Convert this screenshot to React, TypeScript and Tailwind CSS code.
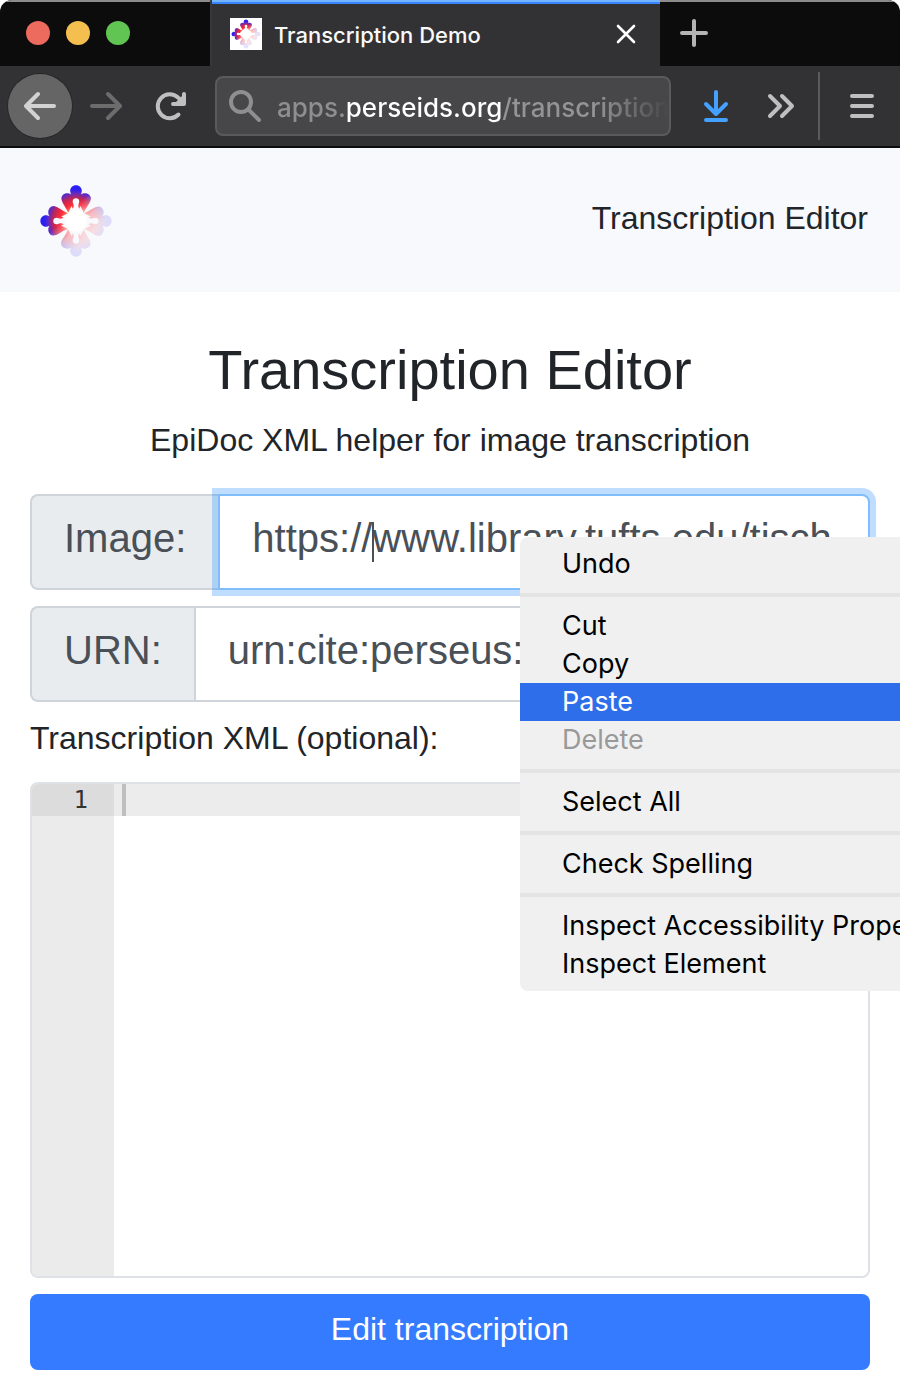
import { useId } from "react";

const PETAL =
  "M139 50 C149 50 157 58 156 68 C155 73 154 75 153 77 C164 69 182 75 183 88 C183 100 171 110 162 131 C158 122 156 120 152 111 L149 119 C145 114 145 110 147 104 C151 97 148 88 139 88 C130 88 127 97 131 104 C133 110 133 114 129 119 L126 111 C122 120 120 122 116 131 C107 110 96 100 96 88 C97 75 114 69 125 77 C124 75 123 73 122 68 C121 58 129 50 139 50 Z";

function Logo({ className }: { className: string }) {
  const id = useId();
  return (
    <svg viewBox="30 46 218 218" className={className} aria-hidden="true">
      <defs>
        <radialGradient id={`${id}c`} gradientUnits="userSpaceOnUse" cx="139" cy="155" r="106">
          <stop offset="0.28" stopColor="#ff8a5c" />
          <stop offset="0.46" stopColor="#fb2a3c" />
          <stop offset="0.62" stopColor="#c8264f" />
          <stop offset="0.76" stopColor="#6a2ab8" />
          <stop offset="0.88" stopColor="#2a20f5" />
        </radialGradient>
        <linearGradient id={`${id}f`} gradientUnits="userSpaceOnUse" x1="122" y1="128" x2="184" y2="190">
          <stop offset="0" stopColor="#fff" />
          <stop offset="0.55" stopColor="#fff" stopOpacity="0.3" />
          <stop offset="1" stopColor="#fff" stopOpacity="0.13" />
        </linearGradient>
        <mask id={`${id}m`} maskUnits="userSpaceOnUse" x="0" y="0" width="300" height="300">
          <rect width="300" height="300" fill={`url(#${id}f)`} />
        </mask>
      </defs>
      <circle cx="139" cy="155" r="32" fill="#fff" />
      <g mask={`url(#${id}m)`} fill={`url(#${id}c)`}>
        {[0, 90, 180, 270].map((angle) => (
          <path key={angle} d={PETAL} transform={`rotate(${angle} 139 155)`} />
        ))}
      </g>
    </svg>
  );
}

function TabStrip() {
  return (
    <div className="flex h-[66px] border-t-2 border-[#8c8c8c] bg-[#0c0c0d]">
      <div className="flex w-[210px] shrink-0 items-center gap-4 pb-0.5 pl-[26px]">
        <button aria-label="Close window" className="size-6 rounded-full bg-[#ed6a5e]" />
        <button aria-label="Minimize window" className="size-6 rounded-full bg-[#f5bf4f]" />
        <button aria-label="Zoom window" className="size-6 rounded-full bg-[#61c554]" />
      </div>
      <div className="-mt-0.5 flex w-[450px] items-center border-l-2 border-[#38383a] bg-[#323234] shadow-[inset_0_2px_#75b5ff,inset_0_4px_#3585fb]">
        <div className="ml-[18px] mt-0.5 flex size-8 items-center justify-center bg-white">
          <Logo className="size-[30px]" />
        </div>
        <span className="ml-3 mt-1 flex-1 text-[22px] font-medium leading-7 text-[#f9f9fa]">Transcription Demo</span>
        <button aria-label="Close tab" className="mr-6 mt-0.5">
          <svg viewBox="0 0 20 20" className="size-5" stroke="#fff" strokeWidth="2.6" strokeLinecap="round">
            <path d="M2 2L18 18M18 2L2 18" />
          </svg>
        </button>
      </div>
      <button aria-label="New tab" className="ml-5 pb-0.5">
        <svg viewBox="0 0 28 28" className="size-7" stroke="#b4b4b5" strokeWidth="4" strokeLinecap="round">
          <path d="M14 2V26M2 14H26" />
        </svg>
      </button>
    </div>
  );
}

function Toolbar() {
  return (
    <div className="flex h-[82px] items-center border-b-2 border-[#0c0c0d] bg-[#323234] pl-2 pr-6">
      <button
        aria-label="Back"
        className="flex size-16 shrink-0 items-center justify-center rounded-full bg-[#656565] shadow-[0_0_0_1px_#28282a]"
      >
        <svg viewBox="0 0 32 32" className="size-8" fill="none" stroke="#d2d2d3" strokeWidth="4" strokeLinecap="round" strokeLinejoin="round">
          <path d="M30 16H3M14 4L2 16L14 28" />
        </svg>
      </button>
      <button aria-label="Forward" disabled className="ml-[18px]">
        <svg viewBox="0 0 32 32" className="size-8" fill="none" stroke="#6c6c6d" strokeWidth="4" strokeLinecap="round" strokeLinejoin="round">
          <path d="M2 16H29M18 4L30 16L18 28" />
        </svg>
      </button>
      <button aria-label="Reload" className="ml-8">
        <svg viewBox="0 0 32 32" className="size-8" fill="none" stroke="#bfbfc0" strokeWidth="4" strokeLinecap="round" strokeLinejoin="round">
          <path d="M24.5 24.5A12 12 0 1 1 24 7.500L28 11" />
          <path d="M20 14H30V4Z" fill="#bfbfc0" stroke="none" />
          <path d="M30 4V14H19" />
        </svg>
      </button>
      <div className="ml-[29px] flex h-[60px] min-w-0 flex-1 items-center rounded-lg border-2 border-[#5a5a5c] bg-[#474749] pl-3">
        <svg viewBox="0 0 32 32" className="size-8 shrink-0" fill="none" stroke="#8f8f91" strokeWidth="4" strokeLinecap="round">
          <circle cx="12" cy="12" r="10" />
          <path d="M19.500 19.500L30 30" />
        </svg>
        <input
          aria-label="Address"
          defaultValue="apps.perseids.org/transcription"
          className="ml-4 w-full min-w-0 bg-[linear-gradient(90deg,#8f8f91_0_69px,#fff_69px_225px,#949496_225px_320px,#474749_392px)] bg-clip-text pt-1 text-[26px] font-medium leading-9 text-transparent outline-none"
        />
      </div>
      <button aria-label="Downloads" className="ml-[29px]">
        <svg viewBox="0 0 32 32" className="size-8" fill="none" stroke="#45a1ff" strokeWidth="4" strokeLinecap="round" strokeLinejoin="round">
          <path d="M16 2V23M6 14L16 24L26 14M6 30H26" />
        </svg>
      </button>
      <button aria-label="More tools" className="ml-[34px]">
        <svg viewBox="0 0 30 28" className="h-7 w-[30px]" fill="none" stroke="#bfbfc0" strokeWidth="4" strokeLinecap="round" strokeLinejoin="round">
          <path d="M4 4L14 14L4 24M16 4L26 14L16 24" />
        </svg>
      </button>
      <div className="ml-[22px] h-[68px] w-0.5 bg-[#5a5a5c]" />
      <button aria-label="Open menu" className="ml-7">
        <svg viewBox="0 0 28 28" className="size-7" stroke="#bfbfc0" strokeWidth="4" strokeLinecap="round">
          <path d="M4 4H24M4 14H24M4 24H24" />
        </svg>
      </button>
    </div>
  );
}

const MENU_GROUPS = [["Undo"], ["Cut", "Copy", "Paste", "Delete"], ["Select All"], ["Check Spelling"], ["Inspect Accessibility Properties", "Inspect Element"]];

function itemStyle(item: string) {
  if (item === "Paste") return "bg-[#2e6eea] text-white";
  if (item === "Delete") return "text-[#999999]";
  return "text-black";
}

function ContextMenu() {
  return (
    <div
      role="menu"
      className="absolute left-[520px] top-[537px] z-10 w-[500px] rounded-lg bg-[#f0f0f0] py-2 font-[Inter,sans-serif] text-[27px]"
    >
      {MENU_GROUPS.map((group, index) => (
        <div key={group[0]}>
          {index > 0 && <div className="my-2.5 h-1 bg-[#e4e4e4]" />}
          {group.map((item) => (
            <button
              key={item}
              role="menuitem"
              disabled={item === "Delete"}
              className={`block h-[38px] w-full whitespace-nowrap pl-[42px] text-left leading-9 ${itemStyle(item)}`}
            >
              {item}
            </button>
          ))}
        </div>
      ))}
    </div>
  );
}

const LABEL = "flex items-center rounded-l-lg border-2 border-r-0 border-[#ced4da] bg-[#e9ecef] px-8 pb-2 text-[40px] text-[#495057]";
const FIELD = "h-24 w-full rounded-r-lg border-2 bg-white px-8 pb-2 text-[40px] text-[#495057] outline-none";

export default function App() {
  return (
    <div className="relative overflow-hidden bg-white font-['Liberation_Sans',Arial,sans-serif] text-[#212529]">
      <div className="overflow-hidden rounded-t-xl font-[Inter,sans-serif]">
        <TabStrip />
        <Toolbar />
      </div>
      <header className="flex h-36 items-center justify-between bg-[#f8f9fc] px-8">
        <a href="#home" aria-label="Home" className="ml-[7px] pt-0.5">
          <Logo className="size-[74px]" />
        </a>
        <a href="#editor" className="pb-1 text-[32px] leading-[48px]">
          Transcription Editor
        </a>
      </header>
      <main className="px-[30px] pb-[18px] pt-11">
        <h1 className="text-center text-[56px] leading-[68px]">Transcription Editor</h1>
        <p className="mt-3 text-center text-[32px] leading-[48px]">EpiDoc XML helper for image transcription</p>
        <form className="mt-[30px]">
          <div className="flex">
            <label htmlFor="image" className={LABEL}>
              Image:
            </label>
            <div className="relative min-w-0 flex-1">
              <input
                id="image"
                defaultValue="https://www.library.tufts.edu/tisch"
                className={`${FIELD} border-[#80bdff] shadow-[0_0_0_6px_rgba(0,123,255,0.25)]`}
              />
              <span className="absolute left-[154px] top-7 h-10 w-0.5 bg-[#495057]" />
            </div>
          </div>
          <div className="mt-4 flex">
            <label htmlFor="urn" className={LABEL}>
              URN:
            </label>
            <div className="min-w-0 flex-1">
              <input id="urn" defaultValue="urn:cite:perseus:" className={`${FIELD} border-[#ced4da]`} />
            </div>
          </div>
          <label htmlFor="xml" className="mt-3 block text-[32px] leading-[48px]">
            Transcription XML (optional):
          </label>
          <div className="mt-5 flex h-[496px] overflow-hidden rounded-lg border-2 border-[#dee2e6]">
            <div className="w-[82px] bg-[#ebebeb] font-['DejaVu_Sans_Mono',monospace] text-2xl leading-8 text-[#333]">
              <div className="bg-[#dcdcdc] pr-[26px] text-right">1</div>
            </div>
            <div className="relative min-w-0 flex-1">
              <textarea
                id="xml"
                className="block size-full resize-none bg-[linear-gradient(#ececec,#ececec)] bg-[length:100%_32px] bg-no-repeat px-2 font-['DejaVu_Sans_Mono',monospace] text-2xl leading-8 outline-none"
              />
              <span className="absolute left-2 top-0 h-8 w-1 bg-[#bfbfbf]" />
            </div>
          </div>
          <button type="button" className="mt-4 block h-[76px] w-full rounded-lg bg-[#357bff] pb-1.5 text-[32px] text-white">
            Edit transcription
          </button>
        </form>
      </main>
      <ContextMenu />
    </div>
  );
}
